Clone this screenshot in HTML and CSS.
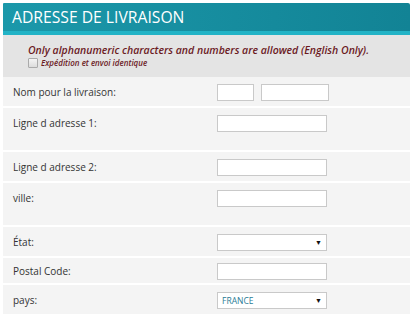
FILE: index.html
```html
<!DOCTYPE html>
<html lang="fr">
<head>
    <meta charset="UTF-8">
    <title>Adresse de livraison</title>
    <link rel="stylesheet" href="styles.css">
</head>
<body>
    <div class="shipping-box">
        <div class="shipping-header">
            <h2>ADRESSE DE LIVRAISON</h2>
        </div>
        <div class="notice">
            <p class="notice-text">Only alphanumeric characters and numbers are allowed (English Only).</p>
            <label class="same-address">
                <span class="checkbox"></span>
                Expédition et envoi identique
            </label>
        </div>
        <div class="form-rows">
            <div class="form-row">
                <label>Nom pour la livraison:</label>
                <div class="field-group">
                    <span class="text-input small"></span>
                    <span class="text-input medium"></span>
                </div>
            </div>
            <div class="form-row tall">
                <label>Ligne d adresse 1:</label>
                <div class="field-group"><span class="text-input"></span></div>
            </div>
            <div class="form-row">
                <label>Ligne d adresse 2:</label>
                <div class="field-group"><span class="text-input"></span></div>
            </div>
            <div class="form-row tall">
                <label>ville:</label>
                <div class="field-group"><span class="text-input"></span></div>
            </div>
            <div class="form-row">
                <label>État:</label>
                <div class="field-group">
                    <span class="select-box"><span class="select-value"></span><span class="arrow">&#9660;</span></span>
                </div>
            </div>
            <div class="form-row short">
                <label>Postal Code:</label>
                <div class="field-group"><span class="text-input"></span></div>
            </div>
            <div class="form-row">
                <label>pays:</label>
                <div class="field-group">
                    <span class="select-box"><span class="select-value">FRANCE</span><span class="arrow">&#9660;</span></span>
                </div>
            </div>
        </div>
    </div>
</body>
</html>
```

FILE: styles.css
```css
body {
    margin: 0;
    font-family: "Open Sans", Arial, sans-serif;
    background-color: #fff;
}
.shipping-box {
    margin: 3px 4px 0 3px;
    width: 407px;
}
.shipping-header {
    height: 28px;
    background: linear-gradient(to right, #1b98aa, #128395);
    border-bottom: 4px solid #22b3c6;
    border-radius: 1px 2px 0 0;
    display: flex;
    align-items: center;
    padding-left: 9px;
}
.shipping-header h2 {
    margin: 0;
    font-size: 15.7px;
    font-weight: normal;
    color: #fff;
}
.notice {
    background-color: #e4e4e4;
    height: 42px;
    padding-left: 25px;
    box-sizing: border-box;
    padding-top: 8px;
}
.notice-text {
    margin: 0;
    font-size: 10.5px;
    font-style: italic;
    font-weight: 600;
    color: #6b1a1f;
    line-height: 14px;
}
.same-address {
    display: flex;
    align-items: center;
    font-size: 8px;
    font-style: italic;
    font-weight: 600;
    color: #6b1a1f;
    line-height: 12px;
}
.checkbox {
    width: 8px;
    height: 8px;
    border: 1px solid #aaa;
    border-radius: 1px;
    background: linear-gradient(#f4f4f4, #dcdcdc);
    margin-right: 3px;
}
.form-rows {
    display: flex;
    flex-direction: column;
    gap: 2px;
    background-color: #fff;
}
.form-row {
    display: grid;
    grid-template-columns: 204px 1fr;
    background-color: #f4f4f4;
    padding: 7px 0 5px 10px;
}
.form-row.tall {
    padding-bottom: 18px;
}
.form-row.short {
    padding-top: 5px;
    padding-bottom: 3px;
}
.form-row label {
    font-size: 10px;
    color: #333;
    line-height: 16px;
}
.field-group {
    display: flex;
    gap: 7px;
}
.text-input,
.select-box {
    display: block;
    width: 110px;
    height: 17px;
    box-sizing: border-box;
    border: 1px solid #c9c9c9;
    background-color: #fff;
}
.text-input.small {
    width: 37px;
}
.text-input.medium {
    width: 68px;
}
.select-box {
    display: flex;
    align-items: center;
    justify-content: space-between;
    padding: 0 4px 0 4px;
}
.select-value {
    font-size: 8.5px;
    color: #2a7b95;
}
.arrow {
    font-size: 7px;
    color: #111;
}
```
